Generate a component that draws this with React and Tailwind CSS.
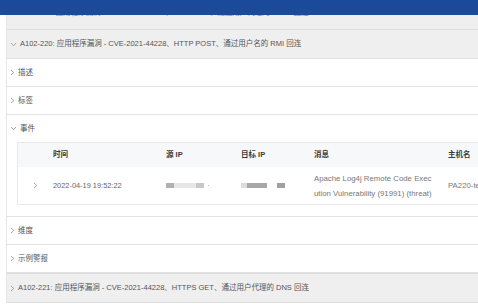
import React from "react";

const Right = ({ className = "" }) => (
  <svg width="5" height="7" viewBox="0 0 5 7" className={className}>
    <path d="M1 1 L3.8 3.5 L1 6" fill="none" stroke="#9a9a9a" strokeWidth="0.9" />
  </svg>
);
const Down = ({ className = "" }) => (
  <svg width="7" height="5" viewBox="0 0 7 5" className={className}>
    <path d="M1 1 L3.5 3.8 L6 1" fill="none" stroke="#9a9a9a" strokeWidth="0.9" />
  </svg>
);

function Row({ label, open, h = "h-[28px]" }) {
  return (
    <div className={`${h} flex items-center gap-[3px] pl-[3px] border-b border-[#e3e3e3] text-[7.5px] text-[#555]`}>
      {open ? <Down /> : <Right />}
      <span>{label}</span>
    </div>
  );
}

export default function App() {
  return (
    <div className="w-[478px] h-[304px] overflow-hidden bg-white font-['Liberation_Sans','Noto_Sans_CJK_SC',sans-serif]">
      <div className="h-[15px] bg-[#1b4a9b]" />
      <div className="ml-[6px] border-l border-[#e6e6e6] overflow-hidden">
        <div className="h-[15px] bg-[#efefef] border-b border-[#dedede] overflow-hidden">
          <div className="mt-[-8px] pl-[12px] text-[7.5px] leading-[12px] text-[#777] whitespace-nowrap">
            A102-219: 应用程序漏洞 - CVE-2021-44228、HTTP GET、通过用户代理的 LDAP 回连
          </div>
        </div>
        <div className="h-[29px] bg-[#efefef] border-b border-[#e3e3e3] flex items-center gap-[3px] pl-[3px] text-[7.5px] text-[#555] whitespace-nowrap">
          <Down />
          <span>A102-220: 应用程序漏洞 - CVE-2021-44228、HTTP POST、通过用户名的 RMI 回连</span>
        </div>
        <Row label="描述" />
        <Row label="标签" />
        <div className="border-b border-[#e3e3e3]">
          <div className="h-[27px] flex items-center gap-[3px] pl-[3px] text-[7.5px] text-[#555]">
            <Down />
            <span>事件</span>
          </div>
          <div className="ml-[10px] mb-[11px] w-[520px] border border-[#e8e8e8] whitespace-nowrap">
            <div className="h-[24px] bg-[#f7f8fa] flex items-center text-[7.5px] text-[#3a3a3a] font-bold">
              <div className="w-[35px] shrink-0" />
              <div className="w-[113px] shrink-0">时间</div>
              <div className="w-[75px] shrink-0">源 IP</div>
              <div className="w-[73px] shrink-0">目标 IP</div>
              <div className="w-[134px] shrink-0">消息</div>
              <div className="shrink-0">主机名</div>
            </div>
            <div className="h-[37px] flex items-center text-[7.5px] text-[#666]">
              <div className="w-[35px] shrink-0 pl-[15px] flex items-center"><Right /></div>
              <div className="w-[113px] shrink-0 text-[7.4px]">2022-04-19 19:52:22</div>
              <div className="w-[75px] shrink-0 flex items-center">
                <div className="w-[8px] h-[5px] bg-[#b0b0b0]" />
                <div className="w-[22px] h-[5px] bg-[#e6e6e6]" />
                <div className="w-[8px] h-[5px] bg-[#c8c8c8]" />
                <div className="ml-[4px] w-[1px] h-[1px] bg-[#bbb]" />
              </div>
              <div className="w-[73px] shrink-0 flex items-center">
                <div className="w-[6px] h-[5px] bg-[#dcdcdc]" />
                <div className="w-[20px] h-[5px] bg-[#a8a8a8]" />
                <div className="ml-[10px] w-[8px] h-[5px] bg-[#a0a0a0]" />
              </div>
              <div className="w-[134px] shrink-0 text-[7.8px] leading-[15px] text-[#777]">
                <div>Apache Log4j Remote Code Exec</div>
                <div>ution Vulnerability (91991) (threat)</div>
              </div>
              <div className="shrink-0 text-[7.8px] text-[#777]">PA220-test</div>
            </div>
          </div>
        </div>
        <Row label="维度" />
        <Row label="示例警报" />
        <div className="h-[30px] bg-[#efefef] border-b border-[#dcdcdc] border-t flex items-center gap-[3px] pl-[3px] text-[7.5px] text-[#555] whitespace-nowrap">
          <Right />
          <span>A102-221: 应用程序漏洞 - CVE-2021-44228、HTTPS GET、通过用户代理的 DNS 回连</span>
        </div>
      </div>
    </div>
  );
}
